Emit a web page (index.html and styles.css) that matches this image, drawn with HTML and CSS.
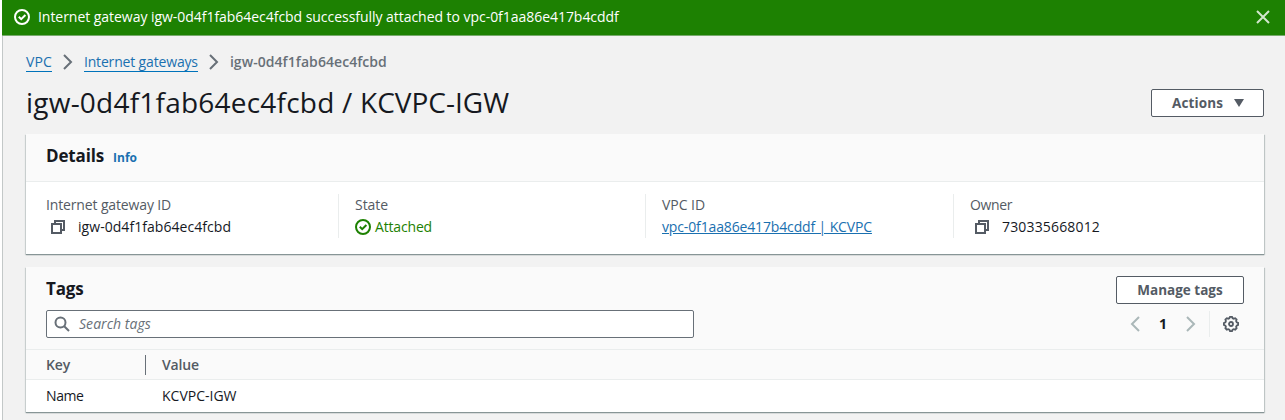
FILE: index.html
```html
<!DOCTYPE html>
<html lang="en">
<head>
<meta charset="utf-8">
<title>Internet gateway details</title>
<link rel="stylesheet" href="styles.css">
</head>
<body>
<svg class="defs" width="0" height="0">
  <symbol id="check" viewBox="0 0 16 16"><circle cx="8" cy="8" r="7"/><path d="M4.8 7.8l2.4 2.4 4.2-4.2"/></symbol>
  <symbol id="copy" viewBox="0 0 16 16"><path d="M2 5h9v9H2z"/><path d="M5 5V2h9v9h-3"/></symbol>
  <symbol id="next" viewBox="0 0 16 16"><path d="M4 1l7 7-7 7"/></symbol>
  <symbol id="prev" viewBox="0 0 16 16"><path d="M12 1L5 8l7 7"/></symbol>
</svg>
<div class="app">
  <div class="flash">
    <svg class="icon"><use href="#check"/></svg>
    <span class="flash-text">Internet gateway igw-0d4f1fab64ec4fcbd successfully attached to vpc-0f1aa86e417b4cddf</span>
    <svg class="icon close" viewBox="0 0 16 16"><path d="M2 2l12 12M14 2L2 14"/></svg>
  </div>
  <main class="page">
    <nav class="crumbs">
      <a class="crumb" href="#">VPC</a>
      <svg class="icon crumb-sep"><use href="#next"/></svg>
      <a class="crumb crumb-list" href="#">Internet gateways</a>
      <svg class="icon crumb-sep"><use href="#next"/></svg>
      <span class="crumb-current">igw-0d4f1fab64ec4fcbd</span>
    </nav>
    <header class="title-row">
      <h1 class="title">igw-0d4f1fab64ec4fcbd / <span class="title-name">KCVPC-IGW</span></h1>
      <button class="button actions">Actions <svg class="caret" viewBox="0 0 10 8"><path d="M0 0h10L5 8z"/></svg></button>
    </header>
    <section class="panel details">
      <div class="panel-head"><h2 class="heading">Details</h2><a class="info" href="#">Info</a></div>
      <div class="fields">
        <div class="field">
          <div class="label label-id">Internet gateway ID</div>
          <div class="value"><svg class="icon copy"><use href="#copy"/></svg>igw-0d4f1fab64ec4fcbd</div>
        </div>
        <div class="field">
          <div class="label">State</div>
          <div class="value status"><svg class="icon"><use href="#check"/></svg>Attached</div>
        </div>
        <div class="field">
          <div class="label">VPC ID</div>
          <div class="value"><a class="vpc-link" href="#">vpc-0f1aa86e417b4cddf | KCVPC</a></div>
        </div>
        <div class="field">
          <div class="label label-owner">Owner</div>
          <div class="value number"><svg class="icon copy"><use href="#copy"/></svg>730335668012</div>
        </div>
      </div>
    </section>
    <section class="panel tags">
      <div class="tags-head">
        <div class="tags-main">
          <h2 class="heading">Tags</h2>
          <div class="search"><svg class="icon" viewBox="0 0 16 16"><circle cx="6.5" cy="6.5" r="5"/><path d="M10.2 10.2L15 15"/></svg><span class="placeholder">Search tags</span></div>
        </div>
        <div class="tags-side">
          <button class="button manage">Manage tags</button>
          <div class="pager">
            <svg class="icon arrow"><use href="#prev"/></svg>
            <span class="page-number">1</span>
            <svg class="icon arrow"><use href="#next"/></svg>
            <span class="divider"></span>
            <svg class="icon gear" viewBox="0 0 16 16"><path d="M6.4 2.2L7 .9h2l.6 1.3 1.2.5 1.4-.5 1.4 1.4-.5 1.4.6 1.3 1.4.6v2l-1.4.7-.6 1.2.5 1.4-1.4 1.4-1.4-.5-1.2.5L9 15.1H7l-.6-1.5-1.2-.5-1.4.5-1.4-1.4.5-1.4-.5-1.2L.9 9V7l1.5-.7.5-1.3-.5-1.4 1.4-1.4 1.4.5z"/><circle cx="8" cy="8" r="2"/></svg>
          </div>
        </div>
      </div>
      <div class="row row-head"><div class="cell key">Key</div><div class="cell">Value</div></div>
      <div class="row"><div class="cell name">Name</div><div class="cell">KCVPC-IGW</div></div>
    </section>
  </main>
</div>
</body>
</html>
```
FILE: styles.css
```css
* { box-sizing: border-box; }
body {
  margin: 0;
  background: #fff;
  color: #16191f;
  font: 14px/22px "Open Sans", "Noto Sans", sans-serif;
}
.defs { display: block; }
.app { height: 420px; margin-left: 2px; background: #f2f2f2; overflow: hidden; }
.icon { width: 16px; height: 16px; flex: none; fill: none; stroke: currentColor; stroke-width: 2; }
a { color: #1a70b0; }

.flash {
  display: flex;
  align-items: center;
  height: 36px;
  padding: 0 14px 1px 12px;
  border-bottom: 1px solid #77aa6c;
  background: #1d8102;
  color: #fff;
}
.flash-text { flex: 1; margin-left: 8px; font-weight: 500; letter-spacing: -0.04px; }
.close { color: #d2e6cd; }

.page { height: 384px; padding: 15px 21px 0 23px; border-left: 1px solid #c3c8c8; }
.crumbs { display: flex; align-items: center; height: 22px; }
.crumb { border-bottom: 1px solid #0073bb; line-height: 19px; text-decoration: none; letter-spacing: 0.1px; }
.crumb-list { letter-spacing: -0.16px; }
.crumb-sep { margin: 0 8px; color: #687078; }
.crumb-current { color: #687078; font-weight: 600; letter-spacing: 0.06px; }

.title-row { display: flex; justify-content: space-between; height: 61px; }
.title { margin: 11px 0 0; font-size: 28px; font-weight: 400; line-height: 36px; letter-spacing: 0.22px; }
.title-name { letter-spacing: 0; }
.button {
  display: flex;
  align-items: center;
  justify-content: center;
  height: 28px;
  padding: 0;
  border: 1px solid #545b64;
  border-radius: 2px;
  background: #fff;
  color: #545b64;
  font: 700 13.5px/20px "Open Sans", sans-serif;
}
.actions { width: 113px; margin-top: 16px; padding-left: 1px; gap: 11px; letter-spacing: 0.13px; }
.caret { width: 10px; height: 8px; fill: #545b64; }
.manage { width: 128px; letter-spacing: 0; }

.panel { background: #fff; box-shadow: 0 1px 1px #879596, 1px 1px 1px #c9cfcf, -1px 1px 1px #d5dada; }
.panel-head {
  display: flex;
  align-items: baseline;
  height: 48px;
  padding: 11px 20px 0;
  border-bottom: 1px solid #eaeded;
  background: #fafafa;
}
.heading { margin: 0; font-size: 17px; font-weight: 700; line-height: 22px; letter-spacing: -0.15px; }
.info { margin-left: 9px; font-size: 12px; font-weight: 700; text-decoration: none; }
.details { height: 120px; margin-top: 0; }
.fields { display: grid; grid-template-columns: 292px 307px 308px 1fr; padding: 12px 20px 0; }
.field { height: 44px; }
.field + .field { padding-left: 16px; border-left: 1px solid #eaeded; }
.label { color: #545b64; letter-spacing: -0.05px; }
.label-id { letter-spacing: -0.14px; }
.label-owner { letter-spacing: -0.35px; }
.value { display: flex; align-items: center; height: 22px; letter-spacing: 0.05px; }
.number { letter-spacing: 0.16px; }
.copy { margin: 0 12px 0 4px; color: #545b64; }
.status { gap: 4px; color: #1d8102; letter-spacing: -0.17px; }
.vpc-link { letter-spacing: -0.14px; }

.tags { height: 145px; margin-top: 13px; }
.tags-head { display: flex; justify-content: space-between; height: 83px; padding: 9px 20px 0; border-bottom: 1px solid #eaeded; background: #fafafa; }
.tags-main .heading { margin-top: 2px; }
.search { display: flex; align-items: center; width: 648px; height: 28px; margin-top: 10px; padding-left: 7px; border: 1px solid #687078; border-radius: 2px; background: #fff; color: #687078; }
.placeholder { margin-left: 9px; font-style: italic; letter-spacing: 0.05px; }
.tags-side { width: 128px; }
.pager { display: flex; align-items: center; height: 28px; margin-top: 6px; padding-left: 11px; }
.arrow { color: #aab7b8; }
.page-number { width: 40px; text-align: center; font-weight: 700; }
.divider { width: 1px; height: 26px; margin: 0 13px 0 10px; background: #eaeded; }
.gear { color: #545b64; stroke-width: 1.8; }

.row { display: grid; grid-template-columns: 116px 1fr; align-items: center; height: 32px; padding: 0 20px; }
.row-head { height: 30px; background: #fafafa; border-bottom: 1px solid #eaeded; color: #545b64; font-weight: 600; letter-spacing: -0.15px; }
.key { height: 20px; margin-right: 16px; border-right: 1px solid #687078; line-height: 20px; }
.name { letter-spacing: -0.4px; }
```
